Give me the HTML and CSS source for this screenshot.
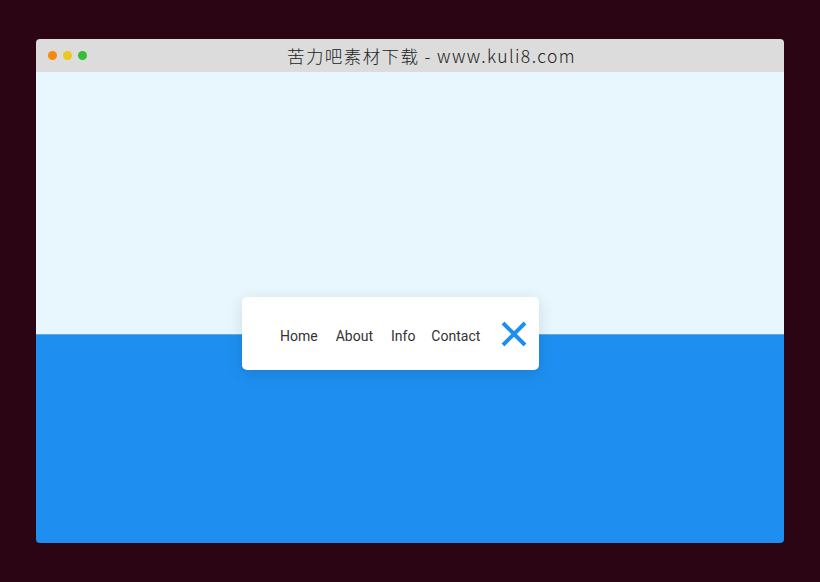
FILE: index.html
```html
<html lang="en">
<head>
  <meta charset="UTF-8">
  <title>Menu</title>
  <link rel="stylesheet" href="styles.css">
</head>
<body>
  <div class="window">
    <div class="titlebar">
      <div class="dots">
        <span class="dot orange"></span>
        <span class="dot yellow"></span>
        <span class="dot green"></span>
      </div>
      <div class="title">苦力吧素材下载 - www.kuli8.com</div>
    </div>
    <div class="stage">
      <div class="top"></div>
      <div class="bottom"></div>

      <div class="menu">
        <nav class="links">
          <a href="#" class="link home">Home</a>
          <a href="#" class="link about">About</a>
          <a href="#" class="link info">Info</a>
          <a href="#" class="link contact">Contact</a>
        </nav>
        <button class="close" type="button">
          <svg width="26" height="26" viewBox="0 0 26 26">
            <path d="M2 2 L24 24 M24 2 L2 24" stroke="#1e8ff0" stroke-width="4" fill="none"/>
          </svg>
        </button>
      </div>
    </div>
  </div>
</body>
</html>
```

FILE: styles.css
```css
body, html {
  margin: 0;
  padding: 0;
}
body {
  background-color: #2b0513;
  font-family: Roboto, "Liberation Sans", sans-serif;
  padding: 39px 36px;
}
.window {
  width: 748px;
  height: 504px;
  border-radius: 4px;
  overflow: hidden;
  display: flex;
  flex-direction: column;
}
.titlebar {
  height: 33px;
  background-color: #dcdcdc;
  display: flex;
  align-items: center;
}
.dots {
  display: flex;
  gap: 6px;
  padding-left: 12px;
}
.dot {
  width: 9px;
  height: 9px;
  border-radius: 50%;
}
.orange { background-color: #f78a0c; }
.yellow { background-color: #ecc81d; }
.green { background-color: #36bd3a; }
.title {
  flex: 1;
  text-align: center;
  font-family: "Noto Sans CJK SC", sans-serif;
  font-weight: 300;
  font-size: 17.5px;
  color: #222;
  letter-spacing: 1.4px;
  padding-right: 8px;
}
.stage {
  flex: 1;
  display: flex;
  flex-direction: column;
  position: relative;
}
.top {
  height: 262px;
  background-color: #e8f7fe;
  border-bottom: 1px solid #5eaedb;
}
.bottom {
  flex: 1;
  background-color: #1e8ff0;
}
.menu {
  position: absolute;
  left: 206px;
  top: 225px;
  width: 297px;
  height: 73px;
  background-color: #fff;
  border-radius: 5px;
  box-shadow: 0 4px 16px rgba(0, 0, 0, 0.12);
  display: flex;
  align-items: center;
  box-sizing: border-box;
  padding-left: 38px;
}
.links {
  display: flex;
  align-items: center;
  padding-top: 4px;
}
.link {
  color: #333;
  text-decoration: none;
  font-size: 14px;
  margin-right: 18px;
}
.link.info {
  margin-right: 16px;
}
.link.contact {
  margin-right: 21px;
}
.close {
  border: none;
  background: none;
  padding: 0;
  width: 26px;
  height: 26px;
  display: flex;
}
```
